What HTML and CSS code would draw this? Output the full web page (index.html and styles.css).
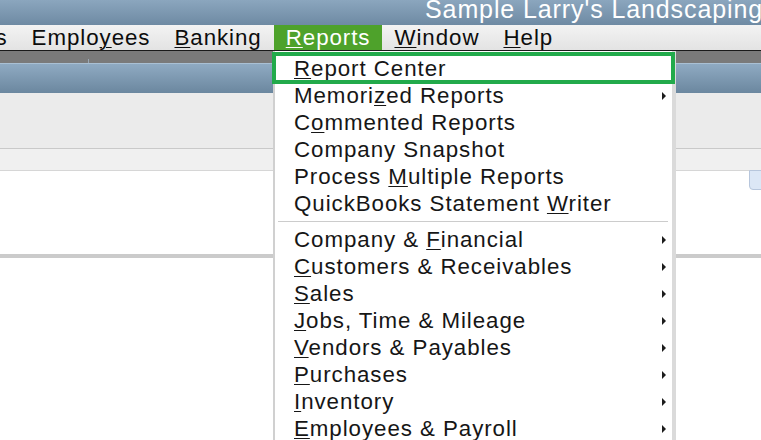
FILE: index.html
```html
<!doctype html>
<html>
<head>
    <meta charset="UTF-8">
    <title>Sample Larry's Landscaping</title>
    <link rel="stylesheet" href="styles.css">
</head>
<body>
    <div class="titlebar">Sample Larry's Landscaping</div>

    <nav class="menubar">
        <ul>
            <li>Lists</li>
            <li>Emplo<u>y</u>ees</li>
            <li><u>B</u>anking</li>
            <li class="active"><u>R</u>eports</li>
            <li><u>W</u>indow</li>
            <li><u>H</u>elp</li>
        </ul>
    </nav>

    <div class="strip"><span class="tick"></span></div>
    <div class="band"></div>
    <div class="toolbar"></div>
    <div class="tabs"></div>
    <div class="content"></div>
    <div class="divider"></div>
    <div class="content-lower"></div>

    <div class="side-widget"></div>

    <div class="dropdown">
        <div class="focus-ring"></div>
        <ul>
            <li><span><u>R</u>eport Center</span></li>
            <li class="sub"><span>Memori<u>z</u>ed Reports</span><i class="arrow"></i></li>
            <li><span>C<u>o</u>mmented Reports</span></li>
            <li><span>Company Snapshot</span></li>
            <li><span>Process <u>M</u>ultiple Reports</span></li>
            <li><span>QuickBooks Statement <u>W</u>riter</span></li>
            <li class="separator"></li>
            <li class="sub"><span>Company &amp; <u>F</u>inancial</span><i class="arrow"></i></li>
            <li class="sub"><span><u>C</u>ustomers &amp; Receivables</span><i class="arrow"></i></li>
            <li class="sub"><span><u>S</u>ales</span><i class="arrow"></i></li>
            <li class="sub"><span><u>J</u>obs, Time &amp; Mileage</span><i class="arrow"></i></li>
            <li class="sub"><span><u>V</u>endors &amp; Payables</span><i class="arrow"></i></li>
            <li class="sub"><span><u>P</u>urchases</span><i class="arrow"></i></li>
            <li class="sub"><span><u>I</u>nventory</span><i class="arrow"></i></li>
            <li class="sub"><span><u>E</u>mployees &amp; Payroll</span><i class="arrow"></i></li>
        </ul>
    </div>
</body>
</html>
```

FILE: styles.css
```css
body {
    margin: 0;
    width: 761px;
    height: 440px;
    overflow: hidden;
    position: relative;
    background: #ffffff;
    font-family: "Liberation Sans", Arial, sans-serif;
}
ul {
    margin: 0;
    padding: 0;
    list-style: none;
}
u {
    text-decoration-thickness: 1px;
    text-underline-offset: 2px;
}

/* 标题栏 */
.titlebar {
    height: 25px;
    line-height: 19px;
    padding-left: 425px;
    white-space: nowrap;
    overflow: hidden;
    font-size: 25px;
    letter-spacing: 0.9px;
    color: #ffffff;
    background: linear-gradient(#8ba6be, #6e8aa3);
}

/* 菜单栏 */
.menubar {
    height: 25px;
    border-bottom: 1px solid #1a1a1a;
    background: linear-gradient(#f3f3f3, #e3e3e3);
    overflow: hidden;
}
.menubar ul {
    display: flex;
    margin-left: -55px;
}
.menubar li {
    padding: 0 12px;
    height: 25px;
    line-height: 25px;
    font-size: 22.3px;
    letter-spacing: 0.95px;
    color: #0d0d0d;
    white-space: nowrap;
}
.menubar li.active {
    background: #4ea22b;
    color: #ffffff;
}

.strip {
    height: 12px;
    background: #7a7a7a;
    position: relative;
}
.strip .tick {
    position: absolute;
    left: 88px;
    top: 8px;
    width: 1px;
    height: 4px;
    background: #9aa8b5;
}
.band {
    height: 29px;
    border-top: 1px solid #a9c0d4;
    background: linear-gradient(#8faac2, #6b879f);
}
.toolbar {
    height: 55px;
    background: #ebebeb;
    border-bottom: 1px solid #c9c9c9;
}
.tabs {
    height: 21px;
    background: #f0f0f0;
    border-bottom: 1px solid #d6d6d6;
}
.content {
    height: 83px;
}
.divider {
    height: 4px;
    background: #cbcbcb;
}

.side-widget {
    position: absolute;
    left: 749px;
    top: 170px;
    width: 14px;
    height: 18px;
    background: #dce7f6;
    border: 1px solid #b7c6dc;
    border-radius: 0 0 0 4px;
}

/* 下拉菜单 */
.dropdown {
    position: absolute;
    left: 273px;
    top: 51px;
    width: 397px;
    height: 389px;
    padding-top: 4px;
    background: #ffffff;
    border-left: 2px solid #d0d0d0;
    border-right: 4px solid #dadada;
    box-sizing: content-box;
}
.dropdown li {
    display: flex;
    justify-content: space-between;
    align-items: center;
    height: 27px;
    line-height: 27px;
    padding: 0 6px 0 19px;
    font-size: 22.3px;
    letter-spacing: 0.95px;
    color: #161616;
    white-space: nowrap;
}
.dropdown li.separator {
    height: 1px;
    margin: 4px 4px 4px 3px;
    padding: 0;
    background: #cccccc;
}
.dropdown .arrow {
    width: 0;
    height: 0;
    border-left: 4px solid #1c1c1c;
    border-top: 4px solid transparent;
    border-bottom: 4px solid transparent;
}
.focus-ring {
    position: absolute;
    left: -3px;
    top: 1px;
    width: 403px;
    height: 32px;
    border: 4px solid #22aa4b;
    box-sizing: border-box;
}
```
